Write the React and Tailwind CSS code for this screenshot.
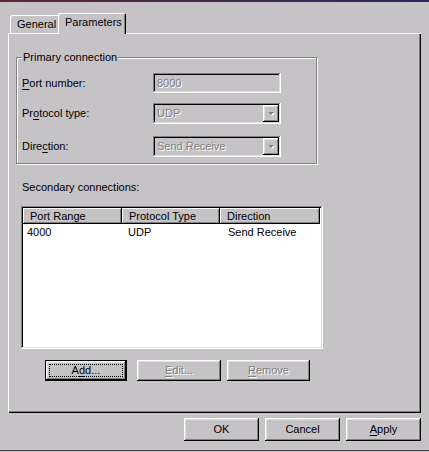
const raised = "shadow-[inset_-1px_-1px_#000,inset_1px_1px_#fff,inset_-2px_-2px_#808080,inset_2px_2px_#dfdfdf]";
const sunken = "shadow-[inset_-1px_-1px_#fff,inset_1px_1px_#808080,inset_-2px_-2px_#dfdfdf,inset_2px_2px_#000]";
const dis = "text-[#808080] [text-shadow:1px_1px_0_#fff]";

function U({ children }) {
    return <span className="underline underline-offset-[2px] decoration-1">{children}</span>;
}

function Btn({ children, w = "w-[75px]", h = "h-[23px]", disabled, def }) {
    const edge = def
        ? "shadow-[inset_0_0_0_1px_#000,inset_-2px_-2px_#000,inset_2px_2px_#fff,inset_-3px_-3px_#808080,inset_3px_3px_#dfdfdf]"
        : raised;
    return (
        <div className={`relative ${w} ${h} ${edge} flex items-center justify-center ${disabled ? dis : "text-black"}`}>
            {def && <span className="absolute inset-[4px] border border-dotted border-black" />}
            <span className="relative">{children}</span>
        </div>
    );
}

function Arrow() {
    return (
        <svg width="9" height="6" viewBox="0 0 9 6">
            <polygon points="2,2 8,2 5,5" fill="#fff" />
            <polygon points="1,1 7,1 4,4" fill="#808080" />
        </svg>
    );
}

function Combo({ value }) {
    return (
        <div className={`h-[21px] w-[128px] p-[2px] flex ${sunken}`}>
            <span className={`flex-1 flex items-center pl-[2px] ${dis}`}>{value}</span>
            <div className={`w-[16px] ${raised} flex items-center justify-center`}>
                <Arrow />
            </div>
        </div>
    );
}

function Head({ w, children }) {
    return (
        <div className={`${w} h-full bg-[#c6c3c6] shadow-[inset_-1px_-1px_#000,inset_1px_1px_#fff,inset_-2px_-2px_#808080] flex items-center pl-[7px]`}>
            {children}
        </div>
    );
}

export default function App() {
    return (
        <div className="w-[429px] h-[452px] bg-[#c6c3c6] flex flex-col font-['Liberation_Sans',Arial,sans-serif] text-[11px] text-black leading-[13px] overflow-hidden">
            {/* title bar edge */}
            <div className="h-[2px] bg-gradient-to-r from-[#5c2838] to-[#28285c]" />

            {/* tabs */}
            <div className="relative z-10 mt-[11px] ml-[10px] flex items-end h-[21px]">
                <div className="w-[50px] h-[18px] mb-px rounded-t-[2px] shadow-[inset_1px_1px_#fff,inset_-1px_0_#000,inset_-2px_0_#808080] flex items-center pl-[7px]">
                    General
                </div>
                <div className="-ml-[2px] w-[68px] h-[21px] bg-[#c6c3c6] rounded-t-[2px] shadow-[inset_1px_1px_#fff,inset_-1px_0_#000,inset_-2px_0_#808080] flex items-start pt-[3px] pl-[7px]">
                    Parameters
                </div>
            </div>

            {/* tab body */}
            <div className="-mt-px ml-[8px] w-[413px] h-[380px] shadow-[inset_1px_1px_#fff,inset_-1px_-1px_#000,inset_-2px_-2px_#808080] pl-[8px] pt-[24px] flex flex-col">
                <div className="relative w-[301px] border border-[#808080] shadow-[inset_1px_1px_#fff,1px_1px_#fff] pt-[15px] pb-[6px] pl-[5px]">
                    <span className="absolute -top-[7px] left-[5px] bg-[#c6c3c6] px-[1px]">Primary connection</span>
                    <div className="grid grid-cols-[131px_128px] items-center">
                        <span><U>P</U>ort number:</span>
                        <div className={`h-[20px] w-[128px] ${sunken} flex items-center pl-[4px] ${dis}`}>8000</div>
                    </div>
                    <div className="grid grid-cols-[131px_128px] items-center mt-[10px]">
                        <span>Pr<U>o</U>tocol type:</span>
                        <Combo value="UDP" />
                    </div>
                    <div className="grid grid-cols-[131px_128px] items-center mt-[12px]">
                        <span>Dire<U>c</U>tion:</span>
                        <Combo value="Send Receive" />
                    </div>
                </div>

                <div className="ml-[6px] mt-[17px]">Secondary connections:</div>

                <div className={`ml-[5px] mt-[12px] w-[302px] h-[143px] bg-white p-[2px] flex flex-col ${sunken}`}>
                    <div className="flex h-[16px] shrink-0">
                        <Head w="w-[99px]">Port Range</Head>
                        <Head w="w-[98px]">Protocol Type</Head>
                        <Head w="w-[100px]">Direction</Head>
                        <div className="flex-1 h-full bg-[#c6c3c6] shadow-[inset_1px_1px_#fff]" />
                    </div>
                    <div className="flex h-[17px] items-center">
                        <span className="w-[99px] pl-[4px]">4000</span>
                        <span className="w-[98px] pl-[6px]">UDP</span>
                        <span className="w-[100px] pl-[8px]">Send Receive</span>
                    </div>
                </div>

                <div className="flex mt-[11px] ml-[29px]">
                    <Btn w="w-[82px]" h="h-[21px]" def>A<U>d</U>d...</Btn>
                    <div className="ml-[10px]">
                        <Btn w="w-[84px]" h="h-[21px]" disabled><U>E</U>dit...</Btn>
                    </div>
                    <div className="ml-[6px]">
                        <Btn w="w-[83px]" h="h-[21px]" disabled><U>R</U>emove</Btn>
                    </div>
                </div>
            </div>

            {/* dialog buttons */}
            <div className="mt-[5px] pr-[8px] flex justify-end gap-[6px]">
                <Btn>OK</Btn>
                <Btn>Cancel</Btn>
                <Btn><U>A</U>pply</Btn>
            </div>

            <div className="mt-auto mb-px h-px bg-[#404040]" />
        </div>
    );
}
